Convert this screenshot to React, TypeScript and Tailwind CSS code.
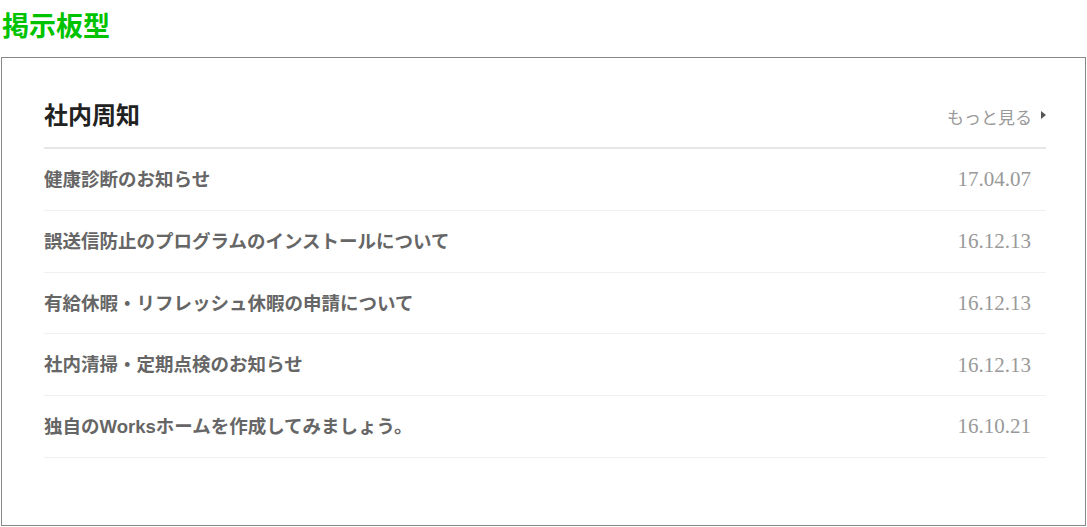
const notices = [
  { title: "健康診断のお知らせ", date: "17.04.07" },
  { title: "誤送信防止のプログラムのインストールについて", date: "16.12.13" },
  { title: "有給休暇・リフレッシュ休暇の申請について", date: "16.12.13" },
  { title: "社内清掃・定期点検のお知らせ", date: "16.12.13" },
  { title: "独自のWorksホームを作成してみましょう。", date: "16.10.21" },
]

const App = () => {
  return (
    <div className="w-[1087px] h-[527px] bg-white font-['Liberation_Sans','Noto_Sans_CJK_JP',sans-serif] overflow-hidden">
      <h1 className="pl-[2px] pt-[11px] h-[57px] text-[27px] leading-[32px] font-bold text-[#00c300]">
        掲示板型
      </h1>
      <div className="ml-px w-[1085px] h-[469px] border border-[#888] pt-[40px] pl-[42px] pr-[39px]">
        <div className="flex items-start justify-between h-[51px] border-b-2 border-[#e6e6e6]">
          <h2 className="mt-[3px] text-[24px] leading-[30px] font-bold text-[#222]">社内周知</h2>
          <a className="mt-[10px] flex items-start gap-[9px] text-[17px] leading-[22px] text-[#999]">
            もっと見る
            <svg width="5" height="8" viewBox="0 0 5 8" className="mt-[3px]">
              <path d="M0 0 L5 4 L0 8 Z" fill="#555" />
            </svg>
          </a>
        </div>
        <ul>
          {notices.map((n) => (
            <li
              key={n.title}
              className="flex items-center justify-between h-[61.8px] pt-[1px] border-b border-[#f0f0f0]"
            >
              <span className="text-[18.5px] font-bold text-[#666]">{n.title}</span>
              <span className="pr-[15px] text-[21px] text-[#999] font-['Liberation_Serif',serif]">
                {n.date}
              </span>
            </li>
          ))}
        </ul>
      </div>
    </div>
  )
}

export default App
